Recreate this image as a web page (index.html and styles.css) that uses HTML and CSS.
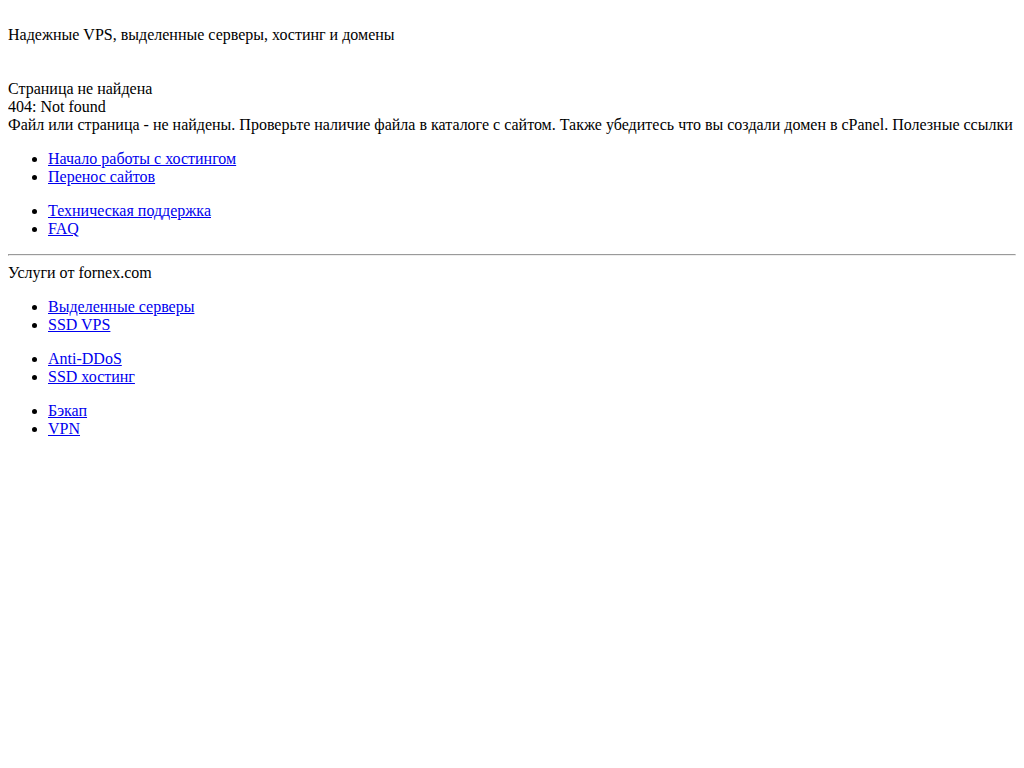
FILE: index.html
```html
<!DOCTYPE html>
<html lang="ru">
<head>
    <meta charset="UTF-8">
    <title>Страница не найдена</title>
    <link rel="stylesheet" href="styles.css">
</head>
<body>
    <div class="header">
        <p class="slogan">Надежные VPS, выделенные серверы, хостинг и домены</p>
    </div>

    <div class="content">
        <div>Страница не найдена</div>
        <div>404: Not found</div>
        <div>Файл или страница - не найдены. Проверьте наличие файла в каталоге с сайтом. Также убедитесь что вы создали домен в cPanel. Полезные ссылки</div>
        <ul>
            <li><a href="#">Начало работы с хостингом</a></li>
            <li><a href="#">Перенос сайтов</a></li>
        </ul>
        <ul>
            <li><a href="#">Техническая поддержка</a></li>
            <li><a href="#">FAQ</a></li>
        </ul>
    </div>

    <hr>

    <div class="footer">
        <div>Услуги от fornex.com</div>
        <ul>
            <li><a href="#">Выделенные серверы</a></li>
            <li><a href="#">SSD VPS</a></li>
        </ul>
        <ul>
            <li><a href="#">Anti-DDoS</a></li>
            <li><a href="#">SSD хостинг</a></li>
        </ul>
        <ul>
            <li><a href="#">Бэкап</a></li>
            <li><a href="#">VPN</a></li>
        </ul>
    </div>
</body>
</html>
```

FILE: styles.css
```css
body {
    font-family: 'Liberation Serif', 'Times New Roman', serif;
    font-size: 16px;
    color: #000;
    background: #fff;
    margin: 8px;
}
.header {
    padding-top: 18px;
}
.slogan {
    margin: 0;
}
.content {
    margin-top: 36px;
}
ul {
    margin: 16px 0;
    padding-left: 40px;
}
a {
    color: #0000ee;
}
hr {
    margin: 8px 0;
}
```
